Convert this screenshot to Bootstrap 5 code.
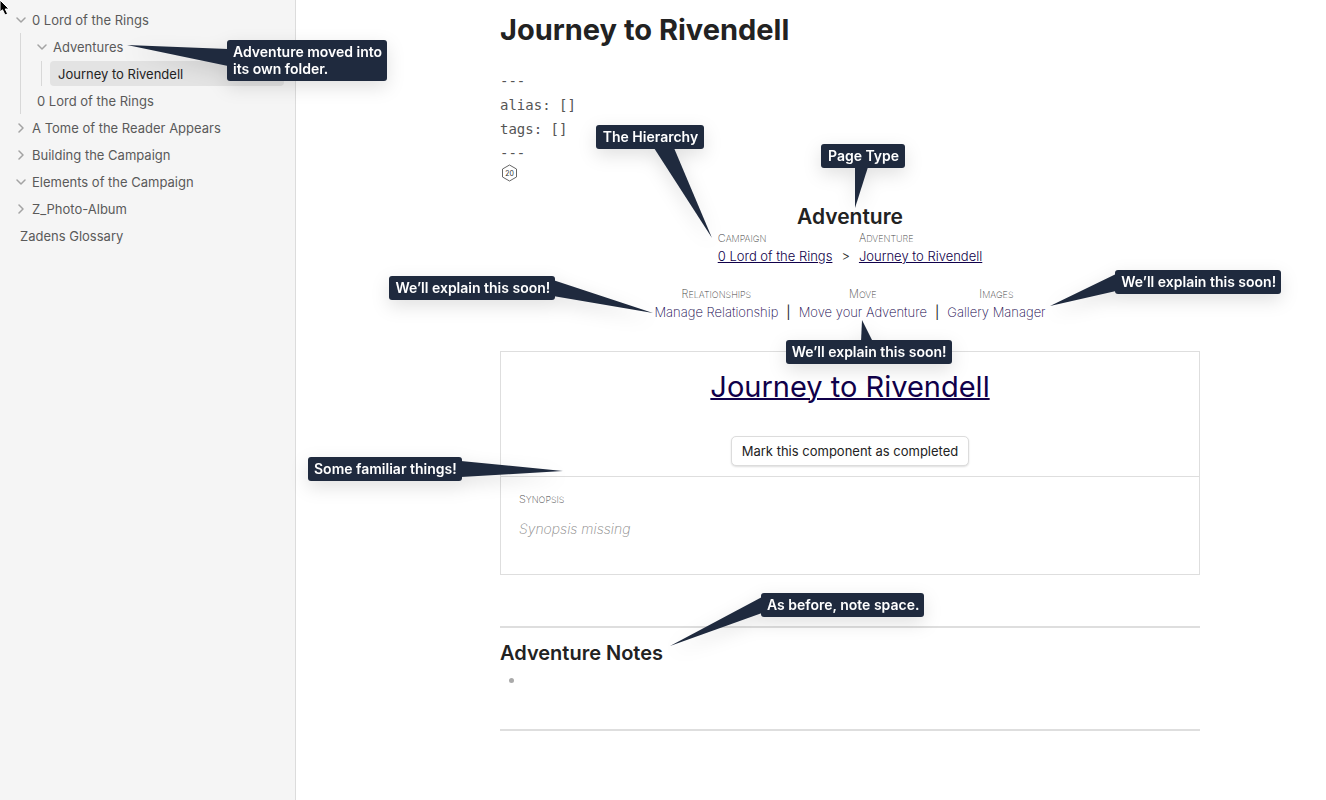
<!DOCTYPE html>
<html lang="en">
<head>
<meta charset="utf-8">
<meta name="viewport" content="width=device-width, initial-scale=1">
<title>Journey to Rivendell</title>
<link href="https://cdn.jsdelivr.net/npm/bootstrap@5.3.0/dist/css/bootstrap.min.css" rel="stylesheet">
<style>
body { font-family: Inter, "Liberation Sans", sans-serif; font-size: 13px; line-height: 18px; color: #222; background: #fff; overflow-x: hidden; }
a { color: #10004a; }
.sidebar { width: 296px; background: #f5f5f5; border-right: 1px solid #dcdcdc; padding: 6px 11px 0 13px; }
.tree { list-style: none; margin: 0; padding: 0; }
.tree a { display: flex; align-items: center; height: 27px; padding-left: 3px; color: #5a5a5a; text-decoration: none; white-space: nowrap; }
.tree a svg { width: 10px; height: 10px; margin-right: 6px; fill: none; stroke: #a3a3a3; stroke-width: 1.5; stroke-linecap: round; stroke-linejoin: round; }
.tree .tree { margin-left: 7px; border-left: 1px solid #d8d8d8; padding-left: 13px; }
.tree .tree .tree { padding-left: 8px; }
.tree .plain { padding-left: 7px; }
.tree a.current { height: 25px; margin: 1px 0; padding-left: 8px; border-radius: 4px; background: #e3e3e3; color: #222; }
.note { padding: 0 126px 0 204px; }
.note h1 { font-size: 29px; line-height: 38px; font-weight: 700; margin: 11px 0 20px; }
.note h2 { font-size: 21px; line-height: 26px; font-weight: 600; margin: 0; }
.meta { font: 14px/24px "DejaVu Sans Mono", monospace; color: #555; margin: 0; overflow: visible; }
.d20 { width: 18px; height: 18px; display: block; margin: -1px 0 22px; }
.trail { gap: 9px; }
.actions { gap: 8px; margin-top: 21px; }
.tiny { font-size: 9px; line-height: 17px; text-transform: uppercase; font-weight: 200; color: #444; }
.tiny::first-letter { font-size: 11px; }
.actions .tiny { line-height: 16px; }
.crumb { font-weight: 300; }
.action { font-weight: 200; text-decoration: none; }
.panel { border: 1px solid #dedede; margin-top: 30px; }
.panel-top { height: 125px; border-bottom: 1px solid #dedede; padding-top: 15px; }
.panel-title { font-size: 29px; line-height: 40px; text-decoration-thickness: 2px; }
.btn-mark { font-size: 13px; line-height: 18px; padding: 5px 10px; margin-top: 29px; border: 1px solid #dcdcdc; border-radius: 5px; background: #fff; box-shadow: 0 1px 2px #0002; color: #222; }
.panel-bottom { padding: 14px 18px 35px; }
.panel-bottom .tiny { line-height: 16px; }
.missing { display: block; margin-top: 11px; font-size: 14px; line-height: 20px; font-weight: 200; color: #888; }
.rule { border: 0; border-top: 2px solid #dedede; opacity: 1; margin: 0; }
.panel + .rule { margin-top: 51px; }
.note .notes-head { font-size: 20px; margin-top: 12px; }
.notes { list-style: none; margin: 0; padding: 12px 0 0 9px; height: 63px; }
.notes li { width: 5px; height: 5px; border-radius: 50%; background: #aaa; }
.tip { position: absolute; z-index: 3; background: #1f2a3e; color: #fff; font-size: 14px; line-height: 17px; font-weight: 600; padding: 3px 5px 4px 6px; border-radius: 3px; white-space: nowrap; text-align: left; filter: drop-shadow(0 6px 9px #0000001f); }
.tip svg { position: absolute; fill: #1f2a3e; overflow: visible; }
.tip-folder { left: 193px; top: 7px; }
.tip-folder svg { left: -100px; top: 5px; }
.tip-type { left: 24px; top: -60px; padding-left: 7px; padding-right: 6px; }
.tip-type svg { left: 34px; top: 23px; }
.tip-hierarchy { left: -122px; top: -105px; padding-left: 7px; padding-right: 6px; }
.tip-hierarchy svg { left: 58px; top: 23px; }
.tip-relation { left: -265px; top: -10px; }
.tip-relation svg { left: 164px; top: 4px; }
.tip-move { left: -13px; top: 54px; }
.tip-move svg { left: 75px; top: -20px; }
.tip-images { left: 168px; top: -16px; }
.tip-images svg { left: -65px; top: 4px; }
.tip-things { left: -193px; top: 105px; }
.tip-things svg { left: 153px; top: 4px; }
.tip-notes { left: 261px; top: -47px; }
.tip-notes svg { left: -91px; top: 4px; }
.pointer { position: absolute; left: 0; top: 0; }
</style>
</head>
<body>
<svg class="pointer" width="10" height="16" viewBox="0 0 10 16" aria-hidden="true"><path d="M0 0v12l2.500-2.200L5 15l2.600-1.200L5.200 9H9z" fill="#000" stroke="#fff"/></svg>
<div class="d-flex min-vh-100">
  <nav class="sidebar flex-shrink-0" aria-label="Files">
    <ul class="tree">
      <li><a href="#"><svg viewBox="0 0 10 10"><path d="M1 3l4 4 4-4"/></svg>0 Lord of the Rings</a>
        <ul class="tree">
          <li class="position-relative"><a href="#"><svg viewBox="0 0 10 10"><path d="M1 3l4 4 4-4"/></svg>Adventures</a>
            <div class="tip tip-folder">Adventure moved into<br>its own folder.<svg width="101" height="22"><path d="M0 0L101 4V21z"/></svg></div>
            <ul class="tree"><li><a href="#" class="current">Journey to Rivendell</a></li></ul></li>
          <li><a href="#">0 Lord of the Rings</a></li>
        </ul></li>
      <li><a href="#"><svg viewBox="0 0 10 10"><path d="M3 1l4 4-4 4"/></svg>A Tome of the Reader Appears</a></li>
      <li><a href="#"><svg viewBox="0 0 10 10"><path d="M3 1l4 4-4 4"/></svg>Building the Campaign</a></li>
      <li><a href="#"><svg viewBox="0 0 10 10"><path d="M1 3l4 4 4-4"/></svg>Elements of the Campaign</a></li>
      <li><a href="#"><svg viewBox="0 0 10 10"><path d="M3 1l4 4-4 4"/></svg>Z_Photo-Album</a></li>
      <li><a href="#" class="plain">Zadens Glossary</a></li>
    </ul>
  </nav>
  <main class="note flex-grow-1">
    <h1>Journey to Rivendell</h1>
    <pre class="meta">---
alias: []
tags: []
---</pre>
    <svg class="d20" viewBox="0 0 18 18" role="img" aria-label="d20"><path d="M9.500 1l7 4v8l-7 4-7-4V5z" fill="none" stroke="#666"/><text x="9.500" y="11.500" font-size="7" text-anchor="middle" fill="#333">20</text></svg>
    <div class="text-center">
      <h2 class="position-relative d-inline-block">Adventure
        <span class="tip tip-type">Page Type<svg width="14" height="41"><path d="M0 0H13L0 41z"/></svg></span></h2>
      <div class="trail d-flex justify-content-center align-items-end">
        <div class="text-start position-relative"><div class="tiny">Campaign</div><a href="#" class="crumb">0 Lord of the Rings</a>
          <span class="tip tip-hierarchy">The Hierarchy<svg width="60" height="91"><path d="M0 0H20L58 90z"/></svg></span></div>
        <span class="crumb">&gt;</span>
        <div class="text-start"><div class="tiny">Adventure</div><a href="#" class="crumb">Journey to Rivendell</a></div>
      </div>
      <div class="actions d-flex justify-content-center align-items-end">
        <div class="position-relative"><div class="tiny">Relationships</div><a href="#" class="action">Manage Relationship</a>
          <span class="tip tip-relation">We’ll explain this soon!<svg width="100" height="33"><path d="M0 0L100 33L0 16z"/></svg></span></div>
        <span>|</span>
        <div class="position-relative"><div class="tiny">Move</div><a href="#" class="action">Move your Adventure</a>
          <span class="tip tip-move">We’ll explain this soon!<svg width="12" height="22"><path d="M1 0L12 22H0z"/></svg></span></div>
        <span>|</span>
        <div class="position-relative"><div class="tiny">Images</div><a href="#" class="action">Gallery Manager</a>
          <span class="tip tip-images">We’ll explain this soon!<svg width="66" height="32"><path d="M66 0V17L0 32z"/></svg></span></div>
      </div>
    </div>
    <section class="panel position-relative">
      <div class="panel-top text-center">
        <a href="#" class="panel-title d-block">Journey to Rivendell</a>
        <button type="button" class="btn btn-mark">Mark this component as completed</button>
      </div>
      <span class="tip tip-things">Some familiar things!<svg width="102" height="17"><path d="M0 0L102 10L0 16z"/></svg></span>
      <div class="panel-bottom">
        <div class="tiny">Synopsis</div>
        <em class="missing">Synopsis missing</em>
      </div>
    </section>
    <hr class="rule">
    <h2 class="notes-head position-relative">Adventure Notes
      <span class="tip tip-notes">As before, note space.<svg width="92" height="50"><path d="M92 0V16L0 49z"/></svg></span></h2>
    <ul class="notes"><li></li></ul>
    <hr class="rule">
  </main>
</div>
<script src="https://cdn.jsdelivr.net/npm/bootstrap@5.3.0/dist/js/bootstrap.bundle.min.js"></script>
</body>
</html>
